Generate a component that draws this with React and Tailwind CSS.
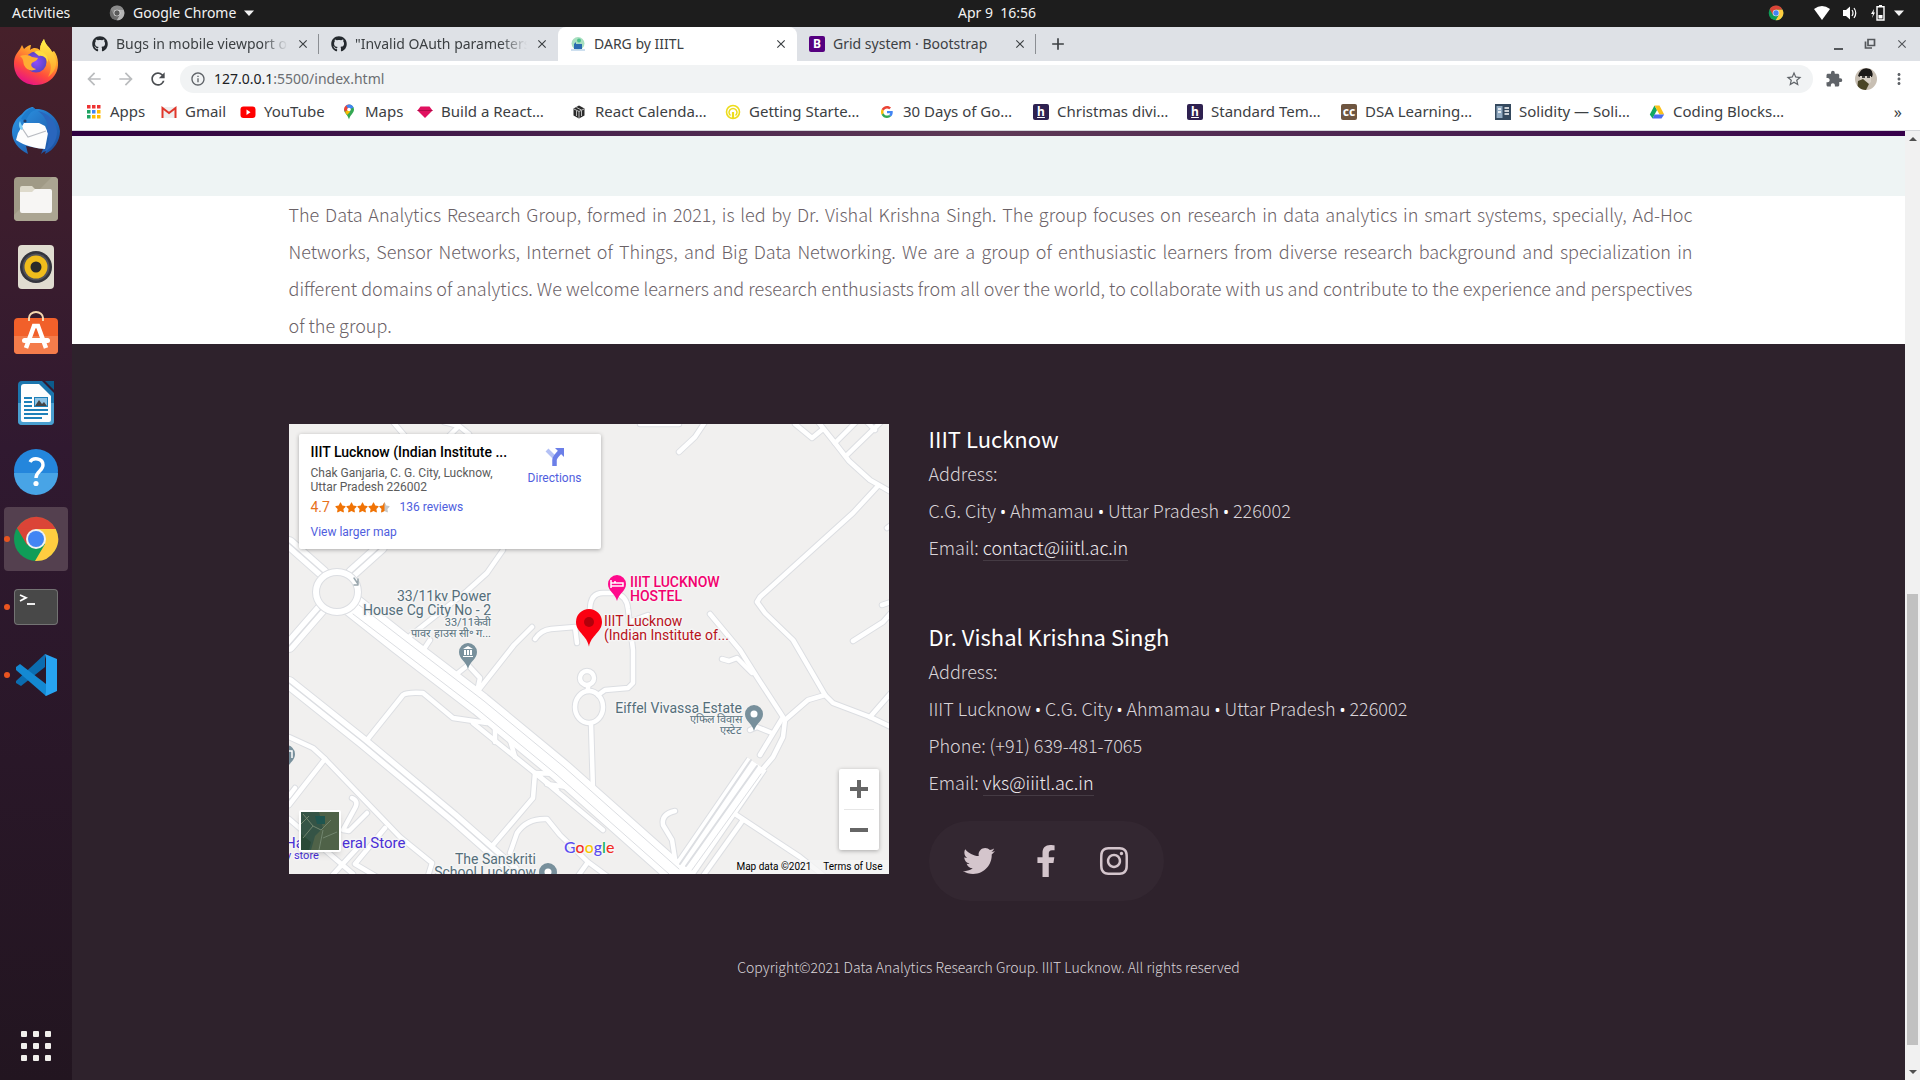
import React from "react";
import { FaTwitter, FaFacebookF, FaInstagram, FaGithub, FaStar, FaStarHalf } from "react-icons/fa";
import { MdExtension, MdStarBorder, MdRefresh, MdArrowBack, MdArrowForward, MdInfoOutline, MdMoreVert, MdClose, MdAdd } from "react-icons/md";

const ChromeIcon = ({ className, mono }) => {
  const c = mono ? ["#8a8a8a", "#6b6b6b", "#b5b5b5", "#5a5a5a", "#eee"] : ["#db4437", "#0f9d58", "#ffcd40", "#4285f4", "#f1f1f1"];
  return (
    <svg viewBox="0 0 48 48" className={className} aria-hidden="true">
      <circle cx="24" cy="24" r="22" fill={c[1]} />
      <path d="M24 24 L5 13 A22 22 0 0 1 43.8 14 L24 14 Z" fill={c[0]} />
      <path d="M24 14 L43.7 14 A22 22 0 0 1 23 46 L33 29 Z" fill={c[2]} />
      <path d="M5 13 L15 30 L24 24 L24 14 Z" fill={c[0]} />
      <circle cx="24" cy="24" r="10" fill={c[4]} />
      <circle cx="24" cy="24" r="8" fill={c[3]} />
    </svg>
  );
};

const Firefox = () => (
  <svg viewBox="0 0 48 48" className="size-12" aria-hidden="true">
    <defs>
      <linearGradient id="ff1" x1="0.8" y1="0" x2="0.3" y2="1">
        <stop offset="0" stopColor="#fff44f" />
        <stop offset="0.35" stopColor="#ffa62b" />
        <stop offset="0.7" stopColor="#ff4a3d" />
        <stop offset="1" stopColor="#e5108a" />
      </linearGradient>
      <radialGradient id="ff2">
        <stop offset="0" stopColor="#8f4bff" />
        <stop offset="1" stopColor="#5a45c4" />
      </radialGradient>
      <linearGradient id="ff3" x1="0.5" y1="0" x2="0.5" y2="1">
        <stop offset="0" stopColor="#fff24a" />
        <stop offset="1" stopColor="#ff9a2a" />
      </linearGradient>
    </defs>
    <path d="M2 25 C2 17 5 14 8 10 L10 6 L12 10 C14 8 17 6 19 6 L18 11 C22 8 25 9 28 11 C28 6 30 3 32 0 C33 6 38 8 40 13 L42 12 C47 18 47 29 44 34 C40 42 32 46 24 46 C11 46 2 37 2 25 Z" fill="url(#ff1)" />
    <path d="M28 11 C28 6 30 3 32 0 C33 6 38 8 40 13 C46 21 46 31 36 38 C41 29 39 21 33 17 Z" fill="url(#ff3)" />
    <circle cx="24" cy="23" r="10.5" fill="url(#ff2)" />
    <path d="M8 17 C13 15 18 16 20 18 L26 19 C25 22 21 23 20 24 C18 26 20 29 24 30 C20 33 14 31 12 26 C11 23 12 20 8 17 Z" fill="#ffac33" />
    <path d="M22 13 C29 9 37 16 36 24 C35 19 31 16 27 17 Z" fill="#ffdc42" />
  </svg>
);

const Thunderbird = () => (
  <svg viewBox="0 0 48 48" className="size-12" aria-hidden="true">
    <defs>
      <linearGradient id="tb" x1="0" y1="0" x2="1" y2="1">
        <stop offset="0" stopColor="#2d9bea" />
        <stop offset="1" stopColor="#1b4b9c" />
      </linearGradient>
    </defs>
    <path d="M10 7 C14 2 18 0 21 0 L23 2 C36 1 47 12 48 24 C48 34 42 43 33 47 L34 43 L29 47 L31 42 L14 39 L16 47 C6 42 0 34 0 25 C0 18 4 11 10 7 Z" fill="url(#tb)" />
    <path d="M9 12 C13 4 18 1 22 1 L24 3 C19 4 16 8 14 14 Z" fill="#1f7ccd" />
    <path d="M12 16 L27 16 L33 19 L36 26 L33 42 C27 42 12 39 4 33 L6 26 Z" fill="#fdfdfd" />
    <path d="M8 18 L16 30 L34 24" fill="none" stroke="#b9bcc2" strokeWidth="1.2" />
    <path d="M8 14 C10 20 12 20 10 23 C7 22 6 17 8 14 Z" fill="#7fd0f7" />
    <path d="M26 4 C37 6 44 15 45 24 C45 33 41 41 32 45 C37 38 38 31 35 24 C37 16 33 9 26 4 Z" fill="#2a66bd" />
    <circle cx="13" cy="14" r="1.6" fill="#213b66" />
  </svg>
);

const Files = () => (
  <svg viewBox="0 0 48 48" className="size-12" aria-hidden="true">
    <rect x="2" y="2" width="44" height="44" rx="4" fill="#a09a86" />
    <path d="M2 40 L40 2 H42 A4 4 0 0 1 46 6 V42 A4 4 0 0 1 42 46 H6 A4 4 0 0 1 2 42 Z" fill="#aba592" />
    <path d="M8 13 A2 2 0 0 1 10 11 H20 L23 14 H30 V22 H8 Z" fill="#dedacb" />
    <path d="M8 17 H20 L23 14 H38 A2 2 0 0 1 40 16 V36 A2 2 0 0 1 38 38 H10 A2 2 0 0 1 8 36 Z" fill="#f7f6f4" />
  </svg>
);

const Rhythmbox = () => (
  <svg viewBox="0 0 48 48" className="size-12" aria-hidden="true">
    <rect x="6" y="2" width="36" height="44" rx="4" fill="#e0dcd0" />
    <circle cx="24" cy="24" r="16" fill="#33343c" />
    <circle cx="24" cy="24" r="13.5" fill="#52535a" />
    <circle cx="24" cy="24" r="11.5" fill="#f0bd1c" />
    <circle cx="24" cy="24" r="5.5" fill="#2a2a2a" />
  </svg>
);

const Software = () => (
  <svg viewBox="0 0 48 48" className="size-12" aria-hidden="true">
    <rect x="2" y="7" width="44" height="36" rx="4" fill="#f1602a" />
    <path d="M2 25 H46 V39 A4 4 0 0 1 42 43 H6 A4 4 0 0 1 2 39 Z" fill="#f47c4b" />
    <path d="M17 10 V7 A7 6 0 0 1 31 7 V10" fill="none" stroke="#f6d8b0" strokeWidth="2" />
    <path d="M14 37 L22 15 H26 L34 37" fill="none" stroke="#fff" strokeWidth="4.500" />
    <rect x="10" y="27" width="28" height="5" rx="2.500" fill="#fff" />
  </svg>
);

const Writer = () => (
  <svg viewBox="0 0 48 48" className="size-12" aria-hidden="true">
    <path d="M10 2 H30 L42 14 V42 A4 4 0 0 1 38 46 H10 A4 4 0 0 1 6 42 V6 A4 4 0 0 1 10 2 Z" fill="#1b75ad" />
    <path d="M6 24 H42 V42 A4 4 0 0 1 38 46 H10 A4 4 0 0 1 6 42 Z" fill="#4a9fd0" />
    <path d="M12 5 H27 L39 17 V41 A2 2 0 0 1 37 43 H11 A2 2 0 0 1 9 41 V8 A3 3 0 0 1 12 5 Z" fill="#fdfdfd" />
    <path d="M33 2 H42 V11 Z" fill="#0c5b8c" />
    <path d="M12 19 H20 M12 23 H20 M12 27 H20 M12 31 H36 M12 35 H36 M12 39 H30" stroke="#1d80b9" strokeWidth="2" />
    <rect x="22" y="18" width="14" height="10" fill="#1d80b9" />
    <rect x="23" y="19" width="12" height="8" fill="#8ec3e4" />
    <path d="M23 27 L27 21 L30 25 L32 23 L35 27 Z" fill="#454545" />
  </svg>
);

const Help = () => (
  <svg viewBox="0 0 48 48" className="size-12" aria-hidden="true">
    <circle cx="24" cy="24" r="22" fill="#2486dc" />
    <path d="M2 26 H46 A22 22 0 0 1 2 26 Z" fill="#48a4e6" />
    <path d="M18 15 C21 10 31 11 31 18 C31 24 24 24 24 31" fill="none" stroke="#fff" strokeWidth="3.4" />
    <circle cx="24" cy="36.5" r="2.6" fill="#fff" />
  </svg>
);

const TerminalIcon = () => (
  <svg viewBox="0 0 48 48" className="size-12" aria-hidden="true">
    <rect x="2" y="6" width="44" height="36" rx="4" fill="#737373" />
    <rect x="3" y="7" width="42" height="34" rx="3" fill="#484848" />
    <path d="M8 12 L14 14.800 L8 18" fill="none" stroke="#fff" strokeWidth="1.800" />
    <path d="M15 21 H23" stroke="#fff" strokeWidth="1.800" />
  </svg>
);

const VsCode = () => (
  <svg viewBox="0 0 48 48" className="size-12" aria-hidden="true">
    <path d="M4 30 L33 3 V16 L9 35 L4 32 Z" fill="#0b6cb0" />
    <path d="M4 16 L8 13 L34 33 V45 L4 19 Z" fill="#1489d2" />
    <path d="M33 3 L45 8 V40 L34 45 C33 45 34 42 34 40 V8 Z" fill="#27a4f2" />
  </svg>
);

const dock = [
  { name: "Firefox", icon: <Firefox /> },
  { name: "Thunderbird", icon: <Thunderbird /> },
  { name: "Files", icon: <Files /> },
  { name: "Rhythmbox", icon: <Rhythmbox /> },
  { name: "Software", icon: <Software /> },
  { name: "Writer", icon: <Writer /> },
  { name: "Help", icon: <Help /> },
  { name: "Chrome", icon: <ChromeIcon className="size-12" />, running: true, active: true },
  { name: "Terminal", icon: <TerminalIcon />, running: true },
  { name: "Code", icon: <VsCode />, running: true },
];

function TopBar() {
  return (
    <header className="flex h-[27px] shrink-0 items-center bg-[#1d1d1d] pb-[2px] text-sm text-[#f2f2f2]">
      <div className="flex flex-1 items-center">
        <button type="button" className="w-[97px] pl-3 text-left">Activities</button>
        <button type="button" className="flex items-center gap-2 pl-3">
          <ChromeIcon mono className="size-4" />
          <span>Google Chrome</span>
          <Caret />
        </button>
      </div>
      <time className="ml-[90px] whitespace-pre">Apr 9  16:56</time>
      <div className="flex flex-1 items-center justify-end gap-2 pr-4">
        <ChromeIcon className="mr-[22px] size-4" />
        <div className="flex gap-3">
          <svg viewBox="0 0 16 16" className="size-4" aria-hidden="true"><path d="M0 4 Q8 -2 16 4 L8 15 Z" fill="#fff" /></svg>
          <svg viewBox="0 0 16 16" className="size-4" aria-hidden="true">
            <path d="M1 5 H4 L8 1.500 V14.500 L4 11 H1 Z" fill="#fff" />
            <path d="M10 5 Q12 8 10 11 M12 3 Q15.500 8 12 13" fill="none" stroke="#fff" strokeWidth="1.200" />
          </svg>
          <svg viewBox="0 0 16 16" className="size-4" aria-hidden="true">
            <path d="M7 1.800 H14 V15 H7 Z M9 0.800 H12" fill="none" stroke="#fff" strokeWidth="1.400" />
            <rect x="8.500" y="10" width="4" height="3.500" fill="#fff" />
            <path d="M4 4 L1 9 H3 L2 13 L5 7.500 H3.500 Z" fill="#fff" />
          </svg>
        </div>
        <Caret />
      </div>
    </header>
  );
}

const Caret = () => <svg viewBox="0 0 10 6" className="h-[6px] w-[10px]" aria-hidden="true"><path d="M0 0.500 H10 L5 6 Z" fill="#f2f2f2" /></svg>;

function Dock() {
  return (
    <nav className="flex w-[72px] shrink-0 flex-col items-center justify-between bg-gradient-to-b from-[#46202a] via-[#301930] via-40% to-[#221520] pt-1 pb-[19px]">
      <ul className="flex flex-col gap-1">
        {dock.map((d) => (
          <li key={d.name} className="relative">
            <button type="button" aria-label={d.name} className={"flex size-16 items-center justify-center rounded-[4px] " + (d.active ? "bg-[#54404f]" : "")}>
              {d.icon}
            </button>
            {d.running && <span className="absolute top-[29px] left-0 size-[6px] rounded-full bg-[#e95420]" />}
          </li>
        ))}
      </ul>
      <button type="button" aria-label="Show Applications" className="grid grid-cols-3 gap-[6px]">
        {Array.from({ length: 9 }, (_, i) => <span key={i} className="size-[6px] rounded-[1px] bg-[#f1efec]" />)}
      </button>
    </nav>
  );
}

const DargIcon = () => (
  <svg viewBox="0 0 16 16" className="size-4" aria-hidden="true">
    <circle cx="8" cy="7.500" r="6.500" fill="#a9e0c0" />
    <path d="M4 13 V8 L6 6 V8 H12 V13 Z" fill="#2b6cb0" />
    <path d="M1 14 H15" stroke="#bcd5ea" strokeWidth="1.500" />
    <circle cx="9" cy="4.500" r="2" fill="#4fc08d" />
  </svg>
);

const Letter = ({ bg, children }) => (
  <span className={"flex size-4 items-center justify-center rounded-[2px] text-xs leading-4 font-bold text-white " + bg}>{children}</span>
);

const tabs = [
  { title: "Bugs in mobile viewport on", icon: <FaGithub className="size-4 text-[#24292e]" />, sep: true },
  { title: "\"Invalid OAuth parameters", icon: <FaGithub className="size-4 text-[#24292e]" /> },
  { title: "DARG by IIITL", icon: <DargIcon />, active: true },
  { title: "Grid system · Bootstrap", icon: <Letter bg="bg-[#560080]">B</Letter>, sep: true },
];

function TabStrip() {
  return (
    <div className="flex h-[34px] items-center bg-[#dee1e6] pl-2 text-[#3c4043]">
      {tabs.map((t) => (
        <div key={t.title} className={"flex h-full w-[239px] items-center pr-[6px] pl-3 " + (t.active ? "rounded-t-lg bg-white" : "")}>
          {t.icon}
          <span className={"ml-2 flex-1 overflow-hidden text-sm whitespace-nowrap " + (t.active || t.title.startsWith("Grid") ? "" : "[mask-image:linear-gradient(to_right,black_85%,transparent)]")}>{t.title}</span>
          <button type="button" aria-label={"Close " + t.title} className="mx-2"><MdClose className="size-[14px]" /></button>
          <span className={"-mr-[6px] h-5 w-px " + (t.sep ? "bg-[#8b8e93]" : "")} />
        </div>
      ))}
      <button type="button" aria-label="New tab" className="ml-3"><MdAdd className="size-5" /></button>
      <div className="ml-auto flex items-center gap-[18px] pr-[11px] text-[#54575b]">
        <button type="button" aria-label="Minimize" className="flex size-[14px] items-end justify-center pb-px"><span className="h-[2px] w-[9px] bg-[#54575b]" /></button>
        <button type="button" aria-label="Restore">
          <svg viewBox="0 0 14 14" className="size-[14px]"><path d="M5 2.500 H11.500 V8.500 H5 Z M2.500 4.500 V11 H9" fill="none" stroke="currentColor" strokeWidth="1.700" /></svg>
        </button>
        <button type="button" aria-label="Close window"><MdClose className="size-[14px]" /></button>
      </div>
    </div>
  );
}

function Toolbar() {
  return (
    <div className="flex h-9 items-center bg-white pr-4 pl-3">
      <div className="flex w-24 gap-3 text-[#5f6368]">
        <button type="button" aria-label="Back" className="text-[#babcbe]"><MdArrowBack className="size-5" /></button>
        <button type="button" aria-label="Forward" className="text-[#babcbe]"><MdArrowForward className="size-5" /></button>
        <button type="button" aria-label="Reload" className="text-[#4a4d51]"><MdRefresh className="size-5" /></button>
      </div>
      <div className="flex h-7 flex-1 items-center rounded-full bg-[#f1f3f4] px-[10px] text-sm">
        <MdInfoOutline className="size-4 text-[#5f6368]" />
        <a href="#top" className="ml-2 flex-1 text-[#6b6e72]"><span className="text-[#202124]">127.0.0.1</span>:5500/index.html</a>
        <button type="button" aria-label="Bookmark"><MdStarBorder className="size-[18px] text-[#5f6368]" /></button>
      </div>
      <div className="flex items-center gap-3 pl-3 text-[#5f6368]">
        <button type="button" aria-label="Extensions"><MdExtension className="size-[18px]" /></button>
        <button type="button" aria-label="Profile">
          <svg viewBox="0 0 22 22" className="size-[22px]">
            <clipPath id="av"><circle cx="11" cy="11" r="11" /></clipPath>
            <g clipPath="url(#av)">
              <rect width="22" height="22" fill="#c8bfb3" />
              <path d="M3 8 Q6 -2 15 1 Q19 4 17 9 L5 9 Z" fill="#1c1a18" />
              <path d="M5 8 H16 V14 L9 20 L5 16 Z" fill="#d9d2c8" />
              <path d="M3 13 L8 11 L14 16 L11 22 H2 Z" fill="#4a4526" />
              <path d="M7 9 H10 M12 9 H15" stroke="#111" strokeWidth="1.500" />
            </g>
          </svg>
        </button>
        <button type="button" aria-label="Menu" className="-mr-1 ml-px"><MdMoreVert className="size-[18px]" /></button>
      </div>
    </div>
  );
}

const AppsIcon = () => (
  <svg viewBox="0 0 14 14" className="size-4 p-px" aria-hidden="true">
    {["#e33", "#e33", "#e33", "#1fa463", "#4285f4", "#fb0", "#1fa463", "#fb0", "#fb0"].map((c, i) => (
      <rect key={i} x={(i % 3) * 5} y={Math.floor(i / 3) * 5} width="3.500" height="3.500" fill={c} />
    ))}
  </svg>
);
const GmailIcon = () => (
  <svg viewBox="0 0 16 16" className="size-4" aria-hidden="true"><rect x="1" y="3" width="14" height="11" fill="#eee" /><path d="M1.500 14 V4 L8 9 L14.500 4 V14" fill="none" stroke="#e0372b" strokeWidth="2" /></svg>
);
const YtIcon = () => (
  <svg viewBox="0 0 16 16" className="size-4" aria-hidden="true"><rect x="0.500" y="2.500" width="15" height="11.500" rx="3" fill="#f00" /><path d="M6.500 5.500 L10.500 8.200 L6.500 11 Z" fill="#fff" /></svg>
);
const MapsIcon = () => (
  <svg viewBox="0 0 16 16" className="size-4" aria-hidden="true">
    <path d="M8 0.500 A5 5 0 0 1 13 5.500 C13 9 9 11 8 15.500 C7 11 3 9 3 5.500 Z" fill="#34a853" />
    <path d="M8 0.500 A5 5 0 0 0 3 5.500 L4 8 L8 5 Z" fill="#ea4335" />
    <path d="M8 0.500 A5 5 0 0 1 12.500 3.500 L8 5.500 L5 1.500 Z" fill="#4285f4" />
    <path d="M4 8 L8 5 L9 8 L6 11 Z" fill="#fbbc04" />
    <circle cx="8" cy="5.500" r="1.800" fill="#fff" />
  </svg>
);
const GemIcon = () => <svg viewBox="0 0 16 16" className="size-4" aria-hidden="true"><path d="M3.500 2.500 H12.500 L15.500 6.500 L8 14 L0.500 6.500 Z" fill="#e0115f" /><path d="M0.500 6.500 H15.500" stroke="#b00a48" /></svg>;
const CubeIcon = () => <svg viewBox="0 0 16 16" className="size-4" aria-hidden="true"><path d="M8 1.500 L13.500 4.500 V11.500 L8 14.500 L2.500 11.500 V4.500 Z" fill="#2b2b2b" /><path d="M3 5 L8 7.500 L13 5 M8 7.500 V14 M5.500 3.500 L10.500 6 M5.500 6.500 V12 M10.500 6.500 V12" fill="none" stroke="#ccc" strokeWidth="0.900" /></svg>;
const PulseIcon = () => <svg viewBox="0 0 16 16" className="size-4" aria-hidden="true"><circle cx="8" cy="8" r="6.500" fill="none" stroke="#eddc1c" strokeWidth="1.600" /><path d="M5.500 11.500 A4 4 0 1 1 10.500 11.500" fill="none" stroke="#eddc1c" strokeWidth="1.500" /><path d="M8 8 V14.500" stroke="#eddc1c" strokeWidth="2.200" /></svg>;
const GoogleG = () => (
  <svg viewBox="0 0 48 48" className="size-4 p-[2px]" aria-hidden="true">
    <path fill="#EA4335" d="M24 9.500c3.540 0 6.710 1.220 9.210 3.600l6.850-6.850C35.900 2.380 30.470 0 24 0 14.620 0 6.510 5.380 2.560 13.220l7.980 6.190C12.430 13.720 17.740 9.500 24 9.500z" />
    <path fill="#4285F4" d="M46.980 24.550c0-1.570-.15-3.090-.38-4.550H24v9.020h12.940c-.58 2.960-2.260 5.480-4.780 7.180l7.730 6c4.510-4.180 7.090-10.360 7.090-17.650z" />
    <path fill="#FBBC05" d="M10.530 28.590c-.48-1.450-.76-2.990-.76-4.590s.27-3.140.76-4.590l-7.980-6.190C.92 16.460 0 20.120 0 24c0 3.880.92 7.540 2.560 10.780l7.970-6.190z" />
    <path fill="#34A853" d="M24 48c6.480 0 11.930-2.130 15.890-5.810l-7.730-6c-2.150 1.450-4.920 2.300-8.160 2.300-6.260 0-11.570-4.220-13.470-9.910l-7.980 6.190C6.510 42.620 14.620 48 24 48z" />
  </svg>
);
const PanelIcon = () => <svg viewBox="0 0 16 16" className="size-4" aria-hidden="true"><rect width="16" height="16" fill="#34495e" /><rect x="1.500" y="2" width="6" height="12" fill="#90a9c0" /><path d="M9.500 4 H14 M9.500 7 H14 M9.500 10 H14 M3 5 H6 M3 8 H6" stroke="#fff" strokeWidth="1.300" /></svg>;
const DriveIcon = () => <svg viewBox="0 0 16 16" className="size-4" aria-hidden="true"><path d="M5.500 1.500 L8 6 L3.500 14.500 L0.800 10.500 Z" fill="#11a861" /><path d="M5.500 1.500 H10.500 L15.200 10.500 H10.500 Z" fill="#fbc11b" /><path d="M5.500 10.500 H15.200 L12.500 14.500 H3.500 Z" fill="#4a6cf0" /></svg>;

const bookmarks = [
  ["Apps", <AppsIcon />, "w-[75px]"],
  ["Gmail", <GmailIcon />, "w-[79px]"],
  ["YouTube", <YtIcon />, "w-[101px]"],
  ["Maps", <MapsIcon />, "w-[76px]"],
  ["Build a React…", <GemIcon />, "w-[154px]"],
  ["React Calenda…", <CubeIcon />, "w-[154px]"],
  ["Getting Starte…", <PulseIcon />, "w-[154px]"],
  ["30 Days of Go…", <GoogleG />, "w-[154px]"],
  ["Christmas divi…", <Letter bg="bg-[#2e2150] underline">h</Letter>, "w-[154px]"],
  ["Standard Tem…", <Letter bg="bg-[#2e2150] underline">h</Letter>, "w-[154px]"],
  ["DSA Learning…", <Letter bg="bg-[#6e5540]">cc</Letter>, "w-[154px]"],
  ["Solidity — Soli…", <PanelIcon />, "w-[154px]"],
  ["Coding Blocks…", <DriveIcon />, "w-[154px]"],
];

function Bookmarks() {
  return (
    <div className="flex h-[34px] items-center justify-between border-b border-[#d5d7da] bg-white pr-[18px] pb-1 pl-[14px] text-[15px] text-[#3c4043]">
      <div className="flex">
        {bookmarks.map(([label, icon, w]) => (
          <a key={label} href="#top" className={"flex items-center gap-2 whitespace-nowrap " + w}>{icon}{label}</a>
        ))}
      </div>
      <button type="button" aria-label="More bookmarks" className="text-base">»</button>
    </div>
  );
}

const minor = [
  "M214 126 L198 149 L178 167 L121 212", "M141 216 L133 228", "M243 203 L225 221 L188 268", "M246 215 Q252 206 262 205 L286 203 L288 219",
  "M301 186 Q301 169 314 169 L326 169 Q338 172 339 185 L344 226 L344 259 L339 264 L316 266 L309 271", "M359 191 L340 198",
  "M302 299 L304 366", "M299 261 V267", "M78 316 L114 271 Q118 268 134 269 L164 294 L198 299", "M184 299 L246 349 L314 406", "M206 300 V318", "M221 316 L226 333",
  "M246 349 L268 350 M258 360 L278 363 M250 352 L268 366", "M246 349 L244 374 L204 421", "M179 241 L164 253 M179 241 L191 254 L188 268", "M221 429 L228 409 Q238 394 258 395 L271 411 L299 438 L318 452 M299 438 L289 452",
  "M0 313 L24 324 L36 335 L111 413 L143 439 L139 452", "M36 335 L14 363 L0 381", "M63 374 Q70 377 66 384 L54 406 L60 407 L78 389", "M0 372 L6 364", "M0 395 L64 450 M72 420 L40 455 M96 404 L66 440 L100 460",
  "M416 -2 L406 13 L390 28", "M506 0 L523 14 L534 5", "M526 -6 L546 19 L560 37 L581 56 L602 68", "M546 19 L567 -2 M558 31 L594 -4 M578 -2 L586 6",
  "M588 63 L564 89 L471 173 L468 178 L476 189 L504 216 L536 271 L544 279 L581 293 L602 303", "M581 293 L602 269", "M536 271 L519 276 L496 296 L494 313 L484 333 L473 346",
  "M421 190 L451 226 L468 253 L494 293 L471 331", "M433 235 L440 237 L448 234 L463 249", "M461 306 L468 303 L483 309", "M443 388 L511 433 L535 452", "M454 396 L414 452", "M386 387 Q372 390 374 401 L383 416 L386 435",
  "M602 101 L598 104", "M593 181 L602 178", "M564 217 L594 198 L602 189", "M104 -2 L116 12", "M155 -2 L170 2 L160 12 M170 2 L180 10", "M351 0 H390",
];
const major = ["M0 119 L34 149", "M63 149 L92 123", "M33 184 L0 222", "M0 259 L74 318 L164 393 L224 446"];
const highway = "M62 180 L110 218 L191 280 L271 346 L395 456";
const rampNE = "M391 452 L468 340";

const Pin = ({ x, y, color, r = 9, children }) => (
  <g>
    <path d={`M${x} ${y - r} A${r} ${r} 0 0 1 ${x + r} ${y} C${x + r} ${y + r * 0.800} ${x + 2} ${y + r} ${x} ${y + r * 1.900} C${x - 2} ${y + r} ${x - r} ${y + r * 0.800} ${x - r} ${y} A${r} ${r} 0 0 1 ${x} ${y - r} Z`} fill={color} />
    {children}
  </g>
);

const label = "[paint-order:stroke] [stroke-linejoin:round] stroke-[#f5f5f5] stroke-[3px]";

function CampusMap() {
  return (
    <div className="relative h-[450px] w-[600px] shrink-0 overflow-hidden bg-[#f1f0ef] font-['Roboto',sans-serif] font-normal">
      <svg viewBox="0 0 600 450" className="block size-full" role="img" aria-label="Map of IIIT Lucknow">
        <g fill="none" strokeLinecap="round" strokeLinejoin="round">
          <g stroke="#dcdee2">
            {minor.map((d) => <path key={d} d={d} strokeWidth="6.500" />)}
            {major.map((d) => <path key={d} d={d} strokeWidth="14" />)}
            <path d={highway} strokeWidth="25" strokeLinecap="butt" />
            <path d={rampNE} strokeWidth="25" strokeLinecap="butt" />
            <circle cx="298" cy="254" r="7" strokeWidth="6.500" />
            <ellipse cx="300" cy="283" rx="14" ry="16" strokeWidth="6.500" />
          </g>
          <g stroke="#fff">
            {minor.map((d) => <path key={d} d={d} strokeWidth="4.500" />)}
            {major.map((d) => <path key={d} d={d} strokeWidth="12" />)}
            <path d={highway} strokeWidth="23" strokeLinecap="butt" />
            <path d={rampNE} strokeWidth="23" strokeLinecap="butt" />
            <circle cx="298" cy="254" r="7" strokeWidth="4.500" />
            <ellipse cx="300" cy="283" rx="14" ry="16" strokeWidth="4.500" />
          </g>
          <g stroke="#dcdee2">
            {major.map((d) => <path key={d} d={d} strokeWidth="1.500" />)}
            <path d="M70 181 L114 215 L195 277 L275 343 L390 445" strokeWidth="1" />
            <path d="M64 190 L106 222 L187 284 L267 350 L380 450" strokeWidth="1" />
            <path d="M391 440 L462 336 M397 442 L468 342" strokeWidth="2" />
            <path d="M403 446 L472 350" strokeWidth="1" />
          </g>
          <ellipse cx="48" cy="168" rx="21" ry="20" strokeWidth="8" stroke="#dcdee2" fill="#f1f0ef" />
          <ellipse cx="48" cy="168" rx="21" ry="20" strokeWidth="6" stroke="#fff" />
          <path d="M65 154 L69 160 M69 155 V161 H65" stroke="#9aa7ad" strokeWidth="1.500" />
        </g>

        <Pin x={179} y={228} color="#78909c"><path d="M174 225 L179 222 L184 225 Z M175 226 H177 V231 H175 Z M178 226 H180 V231 H178 Z M181 226 H183 V231 H181 Z M174 232 H184 V233 H174 Z" fill="#fff" /></Pin>
        <Pin x={328} y={160} color="#ff0a8c"><path d="M322 156 V164 M322 162 H334 V159 H322 M325 158 H327" stroke="#fff" strokeWidth="1.500" fill="none" /></Pin>
        <Pin x={300} y={198} r={13} color="#fb0011"><circle cx="300" cy="198" r="5" fill="#b1000b" /></Pin>
        <Pin x={465} y={290} color="#78909c"><circle cx="465" cy="290" r="3.500" fill="#fff" /></Pin>
        <Pin x={259} y={448} color="#78909c"><circle cx="259" cy="448" r="3.500" fill="#fff" /></Pin>
        <Pin x={-3} y={330} color="#78909c"><path d="M-6 327 H3 V334" stroke="#fff" strokeWidth="1.500" fill="none" /></Pin>

        <g className={label} fontSize="14">
          <g fill="#546e7a" textAnchor="end">
            <text x="202" y="177">33/11kv Power</text>
            <text x="202" y="191">House Cg City No - 2</text>
            <text x="453" y="289">Eiffel Vivassa Estate</text>
            <text x="247" y="440">The Sanskriti</text>
            <text x="247" y="453">School Lucknow</text>
            <g fontSize="11">
              <text x="202" y="202">33/11केवी</text>
              <text x="202" y="213">पावर हाउस सी॰ ग...</text>
              <text x="453" y="299">एफिल विवास</text>
              <text x="453" y="310">एस्टेट</text>
            </g>
          </g>
          <g fill="#f2006e" fontWeight="500">
            <text x="341" y="163">IIIT LUCKNOW</text>
            <text x="341" y="177">HOSTEL</text>
          </g>
          <g fill="#b8121b">
            <text x="315" y="202">IIIT Lucknow</text>
            <text x="315" y="216">(Indian Institute of...</text>
          </g>
          <g fill="#4a2fd6">
            <text x="-4" y="424" fontSize="15">Ha</text>
            <text x="53" y="424" fontSize="15">eral Store</text>
            <text x="-3" y="435" fontSize="11">y store</text>
          </g>
          <text x="275" y="429" fontSize="16" className="font-['Lato',sans-serif] font-medium">
            <tspan fill="#5a4bf0">G</tspan><tspan fill="#f22c24">o</tspan><tspan fill="#f7c600">o</tspan><tspan fill="#5a4bf0">g</tspan><tspan fill="#11b05c">l</tspan><tspan fill="#f22c24">e</tspan>
          </text>
        </g>
      </svg>

      <section className="absolute top-[10px] left-[10px] flex h-[115px] w-[302px] justify-between rounded-[2px] bg-white pt-[10px] pr-[19px] pl-3 text-xs shadow-[0_1px_4px_rgba(0,0,0,0.3)]">
        <div>
          <h3 className="text-sm leading-4 font-medium text-black">IIIT Lucknow (Indian Institute ...</h3>
          <p className="mt-[6px] leading-[14px] text-[#5b5b5b]">Chak Ganjaria, C. G. City, Lucknow,<br />Uttar Pradesh 226002</p>
          <div className="mt-[3px] flex h-5 items-center">
            <span className="w-6 text-sm text-[#e7711b]">4.7</span>
            <span className="flex text-[#f07305]">
              {[0, 1, 2, 3].map((i) => <FaStar key={i} className="size-[11px]" />)}
              <span className="relative"><FaStar className="size-[11px] text-[#c7c7c7]" /><FaStarHalf className="absolute top-0 left-0 size-[11px]" /></span>
            </span>
            <a href="#reviews" className="ml-[10px] text-[#4f5ede]">136 reviews</a>
          </div>
          <a href="#map" className="mt-[7px] block leading-4 text-[#4f5ede]">View larger map</a>
        </div>
        <a href="#directions" className="flex flex-col items-center pt-[3px] text-[#4f5ede]">
          <svg viewBox="0 0 20 20" className="size-5" aria-hidden="true">
            <path d="M2 3 L9 10" stroke="#b4c1f5" strokeWidth="4" />
            <path d="M9.500 19 V13 Q9.500 10 16 4" fill="none" stroke="#6b7fe8" strokeWidth="4.500" />
            <path d="M10 1 H19 V10 Z" fill="#6b7fe8" />
          </svg>
          <span className="mt-[3px] leading-4">Directions</span>
        </a>
      </section>

      <button type="button" aria-label="Show satellite imagery" className="absolute bottom-[22px] left-[10px] size-[42px] rounded-[2px] border-2 border-white bg-[#355446] shadow-md">
        <svg viewBox="0 0 38 38" className="size-full" aria-hidden="true">
          <rect width="38" height="38" fill="#355446" />
          <path d="M18 0 H38 V38 H10 L14 24 L22 16 Z" fill="#4f6248" />
          <path d="M0 22 L10 30 L8 38 H0 Z" fill="#2a4a37" />
          <path d="M14 4 H24 V12 H16 Z" fill="#1f5650" />
          <path d="M2 2 L12 14 L2 26 M12 14 L20 18 L30 8 M18 38 L22 18 M22 26 L36 20 M8 4 L0 12" fill="none" stroke="#71856e" strokeWidth="1" />
        </svg>
      </button>

      <div className="absolute right-[10px] bottom-6 flex h-[81px] w-10 flex-col rounded-[2px] bg-white shadow-[0_1px_4px_rgba(0,0,0,0.3)]">
        <button type="button" aria-label="Zoom in" className="flex flex-1 items-center justify-center"><svg viewBox="0 0 18 18" className="size-[18px]"><path d="M9 0 V18 M0 9 H18" stroke="#666" strokeWidth="4" /></svg></button>
        <span className="mx-[5px] h-px bg-[#e6e6e6]" />
        <button type="button" aria-label="Zoom out" className="flex flex-1 items-center justify-center"><svg viewBox="0 0 18 18" className="size-[18px]"><path d="M0 9 H18" stroke="#666" strokeWidth="4" /></svg></button>
      </div>

      <div className="absolute right-0 bottom-0 flex gap-3 bg-[#f5f5f5]/80 px-[6px] text-[10px] leading-[14px] text-black">
        <span>Map data ©2021</span>
        <a href="#terms">Terms of Use</a>
      </div>
    </div>
  );
}

const link = "border-b border-[#453b44] leading-5 text-[#f0ecef]";
const heading = "mb-[3px] text-[22px] leading-7 font-normal text-white";

const Dotted = ({ parts }) => (
  <p>
    {parts.map((part, i) => (
      <React.Fragment key={part}>
        {i > 0 && <>{" "}<span className="font-['Noto_Sans',sans-serif] text-base leading-4 font-normal text-white">•</span>{" "}</>}
        {part}
      </React.Fragment>
    ))}
  </p>
);

function Page() {
  return (
    <div className="flex min-w-0 flex-1 flex-col bg-white font-['Noto_Sans_CJK_SC',sans-serif] text-lg leading-[37px] font-light">
      <div className="h-[5px] bg-gradient-to-r from-[#2f0040] via-[#5e3a56] to-[#36004a]" />
      <div className="h-[60px] bg-[#eef4f4]" />
      <div className="mx-auto w-full max-w-[1400px]">
        <p className="-mr-1 text-justify text-[#6b6267]">
          The Data Analytics Research Group, formed in 2021, is led by Dr. Vishal Krishna Singh. The group focuses on research in data analytics in smart systems, specially, Ad-Hoc Networks, Sensor Networks, Internet of Things, and Big Data Networking. We are a group of enthusiastic learners from diverse research background and specialization in different domains of analytics. We welcome learners and research enthusiasts from all over the world, to collaborate with us and contribute to the experience and perspectives of the group.
        </p>
      </div>
      <footer className="flex-1 bg-[#2e222c] pt-20 text-[#d9d4d8]">
        <div className="mx-auto flex w-full max-w-[1400px] items-start gap-10">
          <CampusMap />
          <div className="flex flex-col items-start">
            <h2 className={heading}>IIIT Lucknow</h2>
            <p>Address:</p>
            <Dotted parts={["C.G. City", "Ahmamau", "Uttar Pradesh", "226002"]} />
            <p>Email: <a href="mailto:contact@iiitl.ac.in" className={link}>contact@iiitl.ac.in</a></p>
            <h2 className={"mt-14 " + heading}>Dr. Vishal Krishna Singh</h2>
            <p>Address:</p>
            <Dotted parts={["IIIT Lucknow", "C.G. City", "Ahmamau", "Uttar Pradesh", "226002"]} />
            <p>Phone: (+91) 639-481-7065</p>
            <p>Email: <a href="mailto:vks@iiitl.ac.in" className={link}>vks@iiitl.ac.in</a></p>
            <div className="mt-5 flex h-20 w-[235px] items-center justify-between rounded-full bg-[#332731] px-[34px] text-[#d4c5cc]">
              <a href="#twitter" aria-label="Twitter"><FaTwitter className="size-8" /></a>
              <a href="#facebook" aria-label="Facebook"><FaFacebookF className="size-8" /></a>
              <a href="#instagram" aria-label="Instagram"><FaInstagram className="size-8" /></a>
            </div>
          </div>
        </div>
        <p className="mt-12 text-center text-sm leading-9">Copyright©2021 Data Analytics Research Group. IIIT Lucknow. All rights reserved</p>
      </footer>
    </div>
  );
}

function Scrollbar() {
  return (
    <div className="flex w-[15px] flex-col items-center justify-between bg-[#f1f1f1] pt-[6px] pb-[6px]" aria-hidden="true">
      <svg viewBox="0 0 8 4" className="h-1 w-2"><path d="M0 4 L4 0 L8 4 Z" fill="#505050" /></svg>
      <div className="mt-[453px] mb-[25px] w-[11px] flex-1 bg-[#c1c1c1]" />
      <svg viewBox="0 0 8 4" className="h-1 w-2"><path d="M0 0 L4 4 L8 0 Z" fill="#505050" /></svg>
    </div>
  );
}

export default function App() {
  return (
    <div className="flex min-h-screen flex-col font-['Noto_Sans',sans-serif]">
      <TopBar />
      <div className="flex flex-1">
        <Dock />
        <div className="flex min-w-0 flex-1 flex-col">
          <TabStrip />
          <Toolbar />
          <Bookmarks />
          <main className="flex flex-1"><Page /><Scrollbar /></main>
        </div>
      </div>
    </div>
  );
}
